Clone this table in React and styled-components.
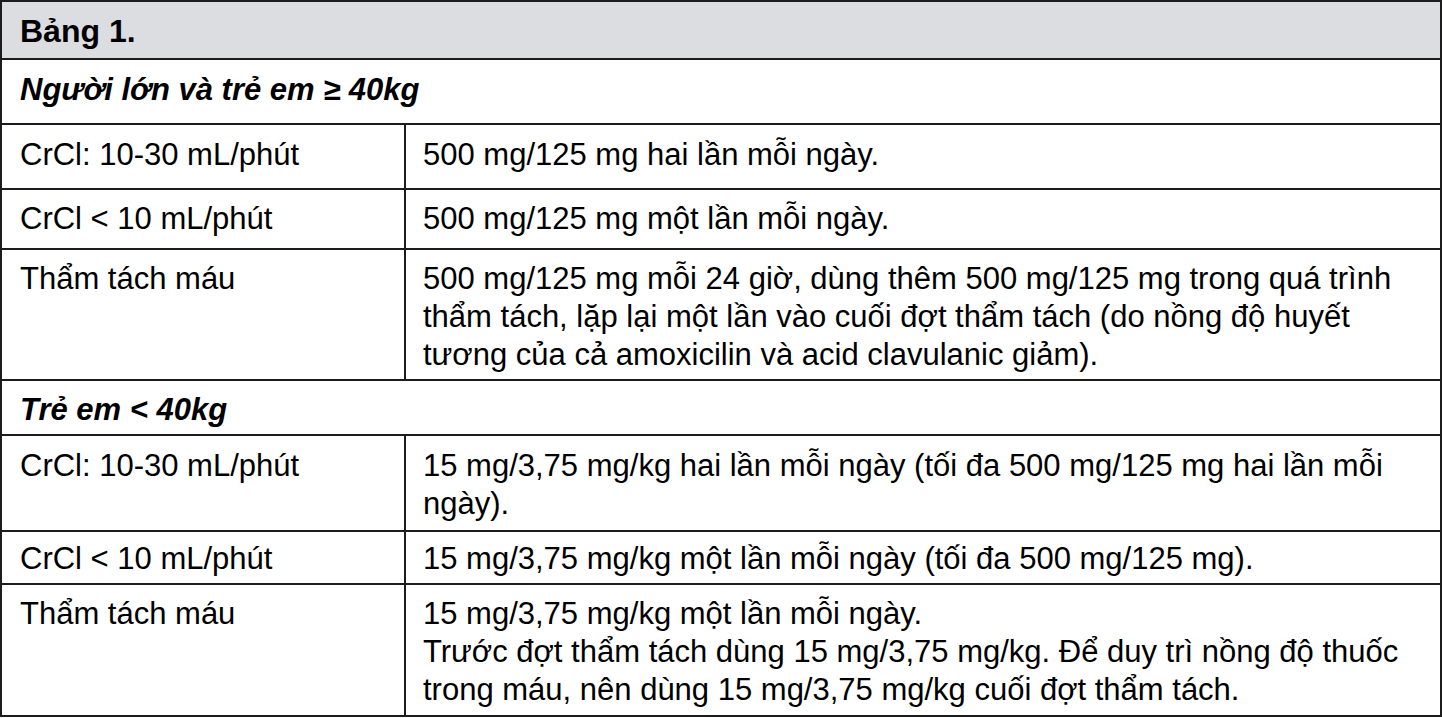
import React from "react";
import styled, { createGlobalStyle } from "styled-components";

const Global = createGlobalStyle`
  html, body { margin: 0; padding: 0; background: #ffffff; }
  body { font-family: "Liberation Sans", Arial, sans-serif; color: #000000; }
`;

const Table = styled.div`
  width: 1442px;
  box-sizing: border-box;
  border: 2px solid #1c1c1c;
  display: flex;
  flex-direction: column;
  font-size: 31px;
  line-height: 38px;
`;

const Row = styled.div`
  display: grid;
  grid-template-columns: ${(p) => (p.$span ? "1fr" : "402px 1fr")};
  height: ${(p) => p.$h}px;
  box-sizing: content-box;
  background: ${(p) => (p.$head ? "#dcdde0" : "#ffffff")};
  border-top: ${(p) => (p.$first ? "none" : "2px solid #1c1c1c")};
`;

const Cell = styled.div`
  padding: ${(p) => p.$pt}px 0 0 ${(p) => (p.$second ? 17 : 18)}px;
  border-left: ${(p) => (p.$second ? "2px solid #1c1c1c" : "none")};
  font-weight: ${(p) => (p.$bold ? 700 : 400)};
  font-style: ${(p) => (p.$italic ? "italic" : "normal")};
  font-size: ${(p) => (p.$title ? "32px" : "inherit")};
  overflow: hidden;
`;

const Line = styled.span`
  display: block;
  white-space: nowrap;
`;

const rows = [
  { left: "CrCl: 10-30 mL/phút", right: ["500 mg/125 mg hai lần mỗi ngày."], h: 63, pt: 11 },
  { left: "CrCl < 10 mL/phút", right: ["500 mg/125 mg một lần mỗi ngày."], h: 58, pt: 10 },
  {
    left: "Thẩm tách máu",
    right: [
      "500 mg/125 mg mỗi 24 giờ, dùng thêm 500 mg/125 mg trong quá trình",
      "thẩm tách, lặp lại một lần vào cuối đợt thẩm tách (do nồng độ huyết",
      "tương của cả amoxicilin và acid clavulanic giảm).",
    ],
    h: 129,
    pt: 10,
  },
];

const rows2 = [
  {
    left: "CrCl: 10-30 mL/phút",
    right: [
      "15 mg/3,75 mg/kg hai lần mỗi ngày (tối đa 500 mg/125 mg hai lần mỗi",
      "ngày).",
    ],
    h: 94,
    pt: 11,
  },
  { left: "CrCl < 10 mL/phút", right: ["15 mg/3,75 mg/kg một lần mỗi ngày (tối đa 500 mg/125 mg)."], h: 51, pt: 8 },
  {
    left: "Thẩm tách máu",
    right: [
      "15 mg/3,75 mg/kg một lần mỗi ngày.",
      "Trước đợt thẩm tách dùng 15 mg/3,75 mg/kg. Để duy trì nồng độ thuốc",
      "trong máu, nên dùng 15 mg/3,75 mg/kg cuối đợt thẩm tách.",
    ],
    h: 130,
    pt: 10,
  },
];

function DataRow({ r }) {
  return (
    <Row $h={r.h}>
      <Cell $pt={r.pt}>
        <Line>{r.left}</Line>
      </Cell>
      <Cell $second $pt={r.pt}>
        {r.right.map((t, i) => (
          <Line key={i}>{t}</Line>
        ))}
      </Cell>
    </Row>
  );
}

export default function App() {
  return (
    <>
      <Global />
      <Table>
        <Row $span $head $first $h={56}>
          <Cell $bold $title $pt={10}>
            <Line>Bảng 1.</Line>
          </Cell>
        </Row>
        <Row $span $h={63}>
          <Cell $bold $italic $pt={11}>
            <Line>Người lớn và trẻ em ≥ 40kg</Line>
          </Cell>
        </Row>
        {rows.map((r, i) => (
          <DataRow key={i} r={r} />
        ))}
        <Row $span $h={53}>
          <Cell $bold $italic $pt={10}>
            <Line>Trẻ em &lt; 40kg</Line>
          </Cell>
        </Row>
        {rows2.map((r, i) => (
          <DataRow key={i} r={r} />
        ))}
      </Table>
    </>
  );
}
